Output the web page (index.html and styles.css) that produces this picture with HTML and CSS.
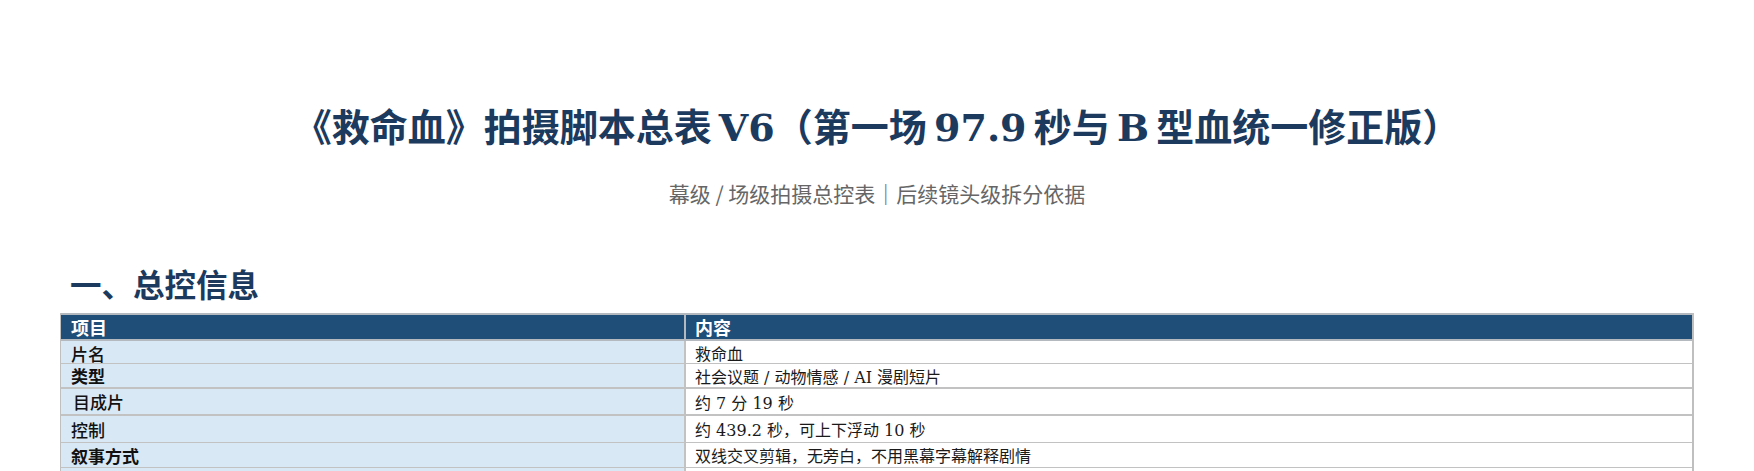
FILE: index.html
```html
<!DOCTYPE html>
<html lang="zh-CN">
<head>
<meta charset="utf-8">
<title>《救命血》拍摄脚本总表 V6</title>
<link rel="stylesheet" href="styles.css">
</head>
<body>
<div class="page">
  <h1 class="title">《救命血》拍摄脚本总表 V6（第一场 97.9 秒与 B 型血统一修正版）</h1>
  <p class="subtitle">幕级 / 场级拍摄总控表｜后续镜头级拆分依据</p>
  <h2 class="section">一、总控信息</h2>
  <div class="grid">
    <div class="row head">
      <div class="cell label">项目</div>
      <div class="cell value">内容</div>
    </div>
    <div class="row r1">
      <div class="cell label medium">片名</div>
      <div class="cell value">救命血</div>
    </div>
    <div class="row r2">
      <div class="cell label bold">类型</div>
      <div class="cell value">社会议题 / 动物情感 / AI 漫剧短片</div>
    </div>
    <div class="row r3">
      <div class="cell label medium indent">目成片</div>
      <div class="cell value">约 7 分 19 秒</div>
    </div>
    <div class="row r4">
      <div class="cell label medium">控制</div>
      <div class="cell value">约 439.2 秒，可上下浮动 10 秒</div>
    </div>
    <div class="row r5">
      <div class="cell label bold">叙事方式</div>
      <div class="cell value">双线交叉剪辑，无旁白，不用黑幕字幕解释剧情</div>
    </div>
    <div class="row r6">
      <div class="cell label"></div>
      <div class="cell value"></div>
    </div>
  </div>
</div>
</body>
</html>
```

FILE: styles.css
```css
html, body {
  margin: 0;
  padding: 0;
  background: #ffffff;
}

body {
  height: 471px;
  overflow: hidden;
  font-family: "DejaVu Serif", "Noto Sans CJK SC", serif;
}

.page {
  padding: 106px 60px 0 60px;
}

.title {
  margin: 0;
  text-align: center;
  font-size: 38px;
  line-height: 44px;
  font-weight: 700;
  word-spacing: -6px;
  color: #1c3a5e;
  font-family: "DejaVu Serif", "Noto Sans CJK SC", serif;
}

.subtitle {
  margin: 29px 0 0 0;
  text-align: center;
  font-size: 21px;
  line-height: 28px;
  color: #666666;
  font-family: "Noto Sans CJK SC", sans-serif;
}

.section {
  margin: 56px 0 0 0;
  padding-left: 10px;
  font-size: 31.5px;
  line-height: 40px;
  font-weight: 700;
  color: #1c3a5e;
  font-family: "Noto Sans CJK SC", sans-serif;
}

.grid {
  margin-top: 10px;
  border-left: 1px solid #bfbfbf;
  border-right: 2px solid #bfbfbf;
}

.row {
  display: flex;
  box-sizing: border-box;
  border-bottom: 1px solid #c2c2c2;
}

.cell {
  display: flex;
  align-items: center;
  box-sizing: border-box;
  font-size: 16px;
  color: #1a1a1a;
  white-space: nowrap;
}

.label {
  flex: 0 0 625px;
  padding-left: 10px;
  background: #d9e8f5;
  border-right: 2px solid #c2c2c2;
  font-family: "Noto Sans CJK SC", sans-serif;
  font-size: 17px;
  color: #111111;
}

.value {
  flex: 1 1 auto;
  padding-left: 9px;
  background: #ffffff;
}

.head {
  height: 28px;
  border-top: 2px solid #b3b9bf;
  border-bottom: 2px solid #b3b9bf;
}

.head .cell {
  background: #1f4e79;
  color: #ffffff;
  font-weight: 700;
  font-size: 18px;
  font-family: "Noto Sans CJK SC", sans-serif;
}

.head .label {
  border-right: 2px solid #b3b9bf;
}

.medium {
  font-weight: 500;
}

.bold {
  font-weight: 700;
}

.indent {
  padding-left: 12px;
}

.r1 { height: 23px; align-items: stretch; }
.r1 .cell { padding-top: 2px; }
.r2 { height: 25px; border-bottom-width: 2px; }
.r3 { height: 27px; border-bottom-width: 2px; }
.r4 { height: 27px; }
.r5 { height: 25px; }
.r6 { height: 25px; }
```
